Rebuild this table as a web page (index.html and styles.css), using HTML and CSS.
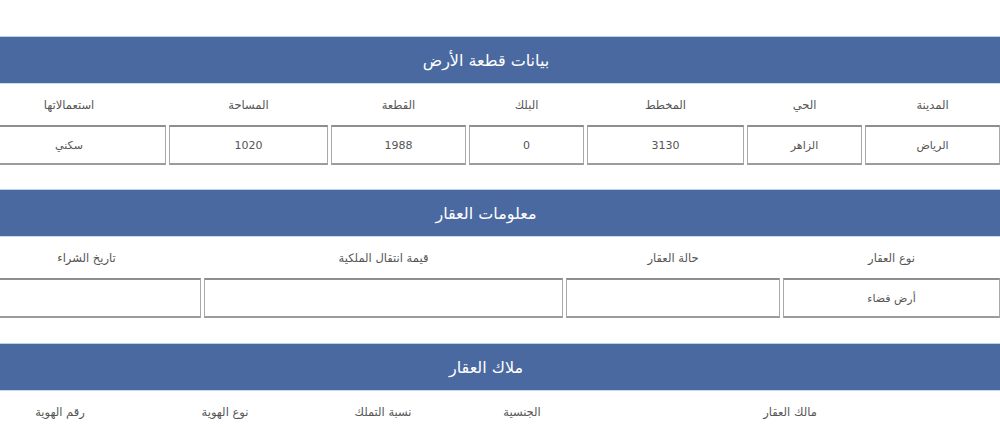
FILE: index.html
```html
<!DOCTYPE html>
<html lang="ar" dir="rtl">
<head>
<meta charset="utf-8">
<title>بيانات العقار</title>
<link rel="stylesheet" href="styles.css">
</head>
<body>
<div class="page">
  <section class="section s1">
    <div class="band">بيانات قطعة الأرض</div>
    <div class="grid g7 labels">
      <div>المدينة</div><div>الحي</div><div>المخطط</div><div>البلك</div><div>القطعة</div><div>المساحة</div><div>استعمالاتها</div>
    </div>
    <div class="grid g7 fields">
      <div class="field">الرياض</div><div class="field">الزاهر</div><div class="field">3130</div><div class="field">0</div><div class="field">1988</div><div class="field">1020</div><div class="field">سكني</div>
    </div>
  </section>
  <section class="section s2">
    <div class="band">معلومات العقار</div>
    <div class="grid g4 labels">
      <div>نوع العقار</div><div>حالة العقار</div><div>قيمة انتقال الملكية</div><div>تاريخ الشراء</div>
    </div>
    <div class="grid g4 fields">
      <div class="field">أرض فضاء</div><div class="field"></div><div class="field"></div><div class="field"></div>
    </div>
  </section>
  <section class="section s3">
    <div class="band">ملاك العقار</div>
    <div class="grid g5 labels">
      <div>مالك العقار</div><div>الجنسية</div><div>نسبة التملك</div><div>نوع الهوية</div><div>رقم الهوية</div>
    </div>
  </section>
</div>
</body>
</html>
```
FILE: styles.css
```css
html, body {
  margin: 0;
  padding: 0;
  background: #ffffff;
  overflow: hidden;
}
body {
  width: 1000px;
  height: 427px;
  font-family: "DejaVu Sans", sans-serif;
  color: #555;
}
.page {
  width: 1028px;
  margin-left: -28px;
  padding-top: 36px;
}
.band {
  height: 46px;
  background: #4a69a0;
  border-top: 1px solid #b9d3ea;
  border-bottom: 1px solid #c9dcee;
  color: #fff;
  font-size: 16px;
  display: flex;
  align-items: center;
  justify-content: center;
}
.grid {
  display: grid;
  column-gap: 3px;
}
.g7 { grid-template-columns: 135px 115px 157px 115px 135px 159px 194px; }
.g4 { grid-template-columns: 217px 214px 359px 229px; }
.g5 { grid-template-columns: 420px 110px 162px 148px 176px; }
.labels {
  height: 41px;
  align-items: center;
  text-align: center;
  font-size: 11.5px;
  color: #555;
}
.s3 .labels { height: 42px; }
.fields {
  height: 40px;
}
.field {
  box-sizing: border-box;
  height: 40px;
  border: 1px solid #a9a9a9;
  border-top: 2px solid #8e8e8e;
  border-bottom: 2px solid #9c9c9c;
  display: flex;
  align-items: center;
  justify-content: center;
  font-size: 11px;
  color: #555;
  background: #fff;
}
.s1 { margin-bottom: 24px; }
.s2 { margin-bottom: 25px; }
```
